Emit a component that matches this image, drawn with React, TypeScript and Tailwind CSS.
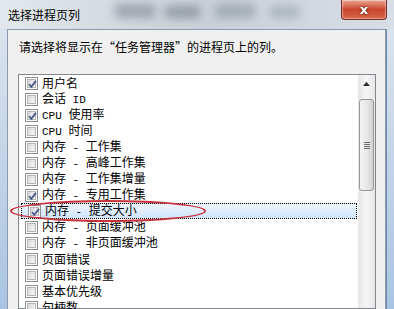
import React from "react";

const rows = [
  { label: "用户名", checked: true },
  { label: "会话 ID", checked: false },
  { label: "CPU 使用率", checked: true },
  { label: "CPU 时间", checked: false },
  { label: "内存 - 工作集", checked: false },
  { label: "内存 - 高峰工作集", checked: false },
  { label: "内存 - 工作集增量", checked: false },
  { label: "内存 - 专用工作集", checked: true },
  { label: "内存 - 提交大小", checked: true, selected: true },
  { label: "内存 - 页面缓冲池", checked: false },
  { label: "内存 - 非页面缓冲池", checked: false },
  { label: "页面错误", checked: false },
  { label: "页面错误增量", checked: false },
  { label: "基本优先级", checked: false },
  { label: "句柄数", checked: false },
];

// ascii runs get a narrow mono face, like the old SimSun half-width glyphs
function Label({ text }: { text: string }) {
  const parts = text.split(/([\x20-\x7e]+)/).filter(Boolean);
  return (
    <span className="whitespace-pre">
      {parts.map((p, i) =>
        /^[\x20-\x7e]+$/.test(p) ? (
          <span
            key={i}
            className="font-['Liberation_Mono',monospace] text-[11px]"
          >
            {p}
          </span>
        ) : (
          <span key={i}>{p}</span>
        )
      )}
    </span>
  );
}

function CheckBox({ checked }: { checked: boolean }) {
  return (
    <div className="w-[13px] h-[13px] border border-[#8e8f8f] bg-white p-[1px] shrink-0">
      <div className="w-full h-full border border-[#b4b4b4] bg-gradient-to-br from-[#d6d6d6] to-[#fbfbfb] relative">
        {checked && (
          <svg
            className="absolute -left-[1px] -top-[1px]"
            width="11"
            height="11"
            viewBox="0 0 11 11"
          >
            <path
              d="M2 5.2 L4.3 7.8 L9 1.8"
              fill="none"
              stroke="#4a5d8c"
              strokeWidth="1.9"
            />
          </svg>
        )}
      </div>
    </div>
  );
}

export default function App() {
  return (
    <div className="w-[394px] h-[309px] overflow-hidden flex flex-col bg-gradient-to-b from-[#dfe6ee] to-[#a9c4e2] font-['Noto_Sans_CJK_SC','Liberation_Sans',sans-serif] text-black">
      {/* Title bar */}
      <div className="relative h-[29px] shrink-0 flex items-start bg-gradient-to-r from-[#e3e8ed] via-[#c9d0d7] to-[#d7dee6] overflow-hidden">
        <div className="absolute left-[115px] top-[4px] w-[40px] h-[14px] bg-[#7c858e] blur-[5px] opacity-60" />
        <div className="absolute left-[165px] top-[6px] w-[35px] h-[12px] bg-[#6f7780] blur-[5px] opacity-60" />
        <div className="absolute left-[215px] top-[4px] w-[40px] h-[14px] bg-[#7c858e] blur-[5px] opacity-50" />
        <div className="absolute left-[270px] top-[6px] w-[30px] h-[12px] bg-[#8a939c] blur-[5px] opacity-50" />
        <span className="relative pl-[8px] pt-[7px] text-[12px] leading-[16px]">
          选择进程页列
        </span>
        <div className="absolute left-[341px] top-0 w-[46px] h-[20px] rounded-b-[4px] border border-t-0 border-[#7a2a1e] bg-gradient-to-b from-[#e8a493] via-[#c9442a] to-[#d6674a] flex items-center justify-center shadow-[inset_0_0_1px_1px_rgba(255,255,255,0.4)]">
          <span className="text-white font-['DejaVu_Sans',sans-serif] font-bold text-[13px] leading-none drop-shadow-[0_0_1px_rgba(0,0,0,0.8)]">
            x
          </span>
        </div>
      </div>

      {/* Frame + client area */}
      <div className="flex-1 flex min-h-0">
        <div className="w-[7px] shrink-0" />
        <div className="flex-1 min-h-0 border-l border-t border-r border-[#8b9aae] bg-[#f0f0f0] flex flex-col">
          <div className="pl-[11px] pt-[9px] text-[12px] leading-[16px]">
            请选择将显示在“任务管理器”的进程页上的列。
          </div>
          <div className="relative mt-[19px] ml-[10px] w-[358px] flex-1 min-h-0 border border-[#828790] bg-white flex">
            <div className="flex-1 flex flex-col">
              {rows.map((r) => (
                <div
                  key={r.label}
                  className={
                    "h-[16px] flex items-center pl-[6px] gap-[4px] text-[12px] leading-[16px] " +
                    (r.selected
                      ? "ml-[2px] pl-[4px] mr-[1px] border border-dotted border-black bg-gradient-to-b from-[#eef5fd] to-[#cfe4fb]"
                      : "")
                  }
                >
                  <CheckBox checked={r.checked} />
                  <Label text={r.label} />
                </div>
              ))}
            </div>
            {/* scrollbar */}
            <div className="w-[17px] shrink-0 bg-gradient-to-r from-[#e6e6e6] via-[#f5f5f5] to-[#e6e6e6] flex flex-col items-center">
              <div className="h-[17px] w-full flex items-center justify-center">
                <svg width="7" height="4" viewBox="0 0 7 4">
                  <path d="M0 4 L3.5 0 L7 4 Z" fill="#2b2b2b" />
                </svg>
              </div>
              <div className="mt-[7px] w-[15px] h-[92px] rounded-[3px] border border-[#979797] bg-gradient-to-r from-[#f3f3f3] via-[#e8e8e8] to-[#d3d3d3] flex items-center justify-center">
                <div className="flex flex-col gap-[1px]">
                  <div className="w-[6px] h-[1px] bg-[#6e6e6e]" />
                  <div className="w-[6px] h-[1px] bg-[#6e6e6e]" />
                  <div className="w-[6px] h-[1px] bg-[#6e6e6e]" />
                  <div className="w-[6px] h-[1px] bg-[#6e6e6e]" />
                </div>
              </div>
            </div>
            {/* red highlight ellipse */}
            <div className="absolute left-[-9px] top-[125px] w-[196px] h-[22px] rounded-[50%] border-2 border-[#c8323a]" />
          </div>
        </div>
        <div className="w-[8px] shrink-0 border-l border-[#6f8aa8]" />
      </div>
    </div>
  );
}
